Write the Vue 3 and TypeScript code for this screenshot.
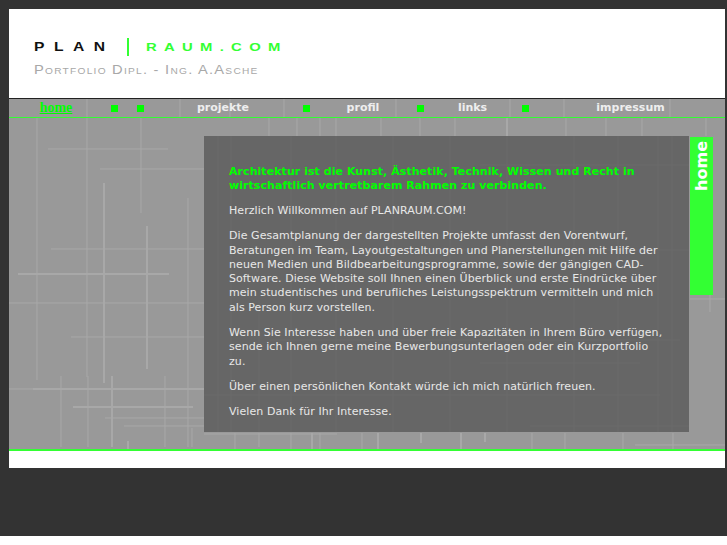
<script setup lang="ts">
type Line = [number, number, number, number, number?]

const navItems = [
  { label: 'home', active: true },
  { sep: true },
  { spacer: true },
  { sep: true },
  { label: 'projekte' },
  { sep: true },
  { label: 'profil' },
  { sep: true },
  { label: 'links' },
  { sep: true },
  { label: 'impressum' }
]

// scratchy background lines in page coordinates
const lines: Line[] = [
  // nav strip
  [87, 99, 87, 117], [180, 99, 180, 117], [230, 99, 230, 117], [284, 99, 284, 117],
  [396, 99, 396, 117], [510, 99, 510, 117], [564, 99, 564, 117], [670, 99, 670, 117],
  // left side
  [37, 118, 37, 380], [87, 118, 87, 377], [141, 118, 141, 213], [104, 183, 104, 383, 2],
  [147, 226, 147, 369, 2], [188, 198, 188, 447], [61, 376, 61, 447], [88, 376, 88, 447],
  [112, 376, 112, 447, 2], [165, 376, 165, 447], [128, 441, 128, 449, 2], [192, 428, 192, 447],
  [48, 149, 168, 149], [100, 169, 204, 169], [51, 249, 204, 249], [18, 274, 169, 274, 2],
  [9, 303, 204, 303], [71, 337, 204, 337], [9, 389, 204, 389], [33, 389, 204, 389, 2],
  [73, 407, 193, 407, 2], [105, 418, 204, 418], [124, 426, 204, 426],
  // band above the panel
  [269, 118, 269, 136], [297, 118, 297, 136], [320, 118, 320, 136], [336, 118, 336, 136],
  [381, 118, 381, 136], [420, 118, 420, 136], [455, 118, 455, 136], [507, 118, 507, 136, 2],
  [566, 118, 566, 136], [606, 118, 606, 136], [642, 118, 642, 136],
  // band below the panel
  [235, 433, 235, 449], [259, 433, 259, 447], [291, 433, 291, 449], [312, 433, 312, 449, 2],
  [320, 433, 320, 449], [362, 433, 362, 449], [378, 433, 378, 449, 2], [421, 433, 421, 443, 2],
  [461, 433, 461, 449, 2], [485, 433, 485, 442, 2], [532, 433, 532, 449], [565, 433, 565, 449],
  [623, 433, 623, 449], [673, 433, 673, 449], [635, 445, 725, 445], [204, 434, 337, 434],
  // right of the panel
  [710, 260, 710, 312], [690, 299, 725, 299], [706, 118, 706, 136],
  // seen through the panel
  [218, 136, 218, 432], [231, 136, 231, 432], [259, 300, 259, 432], [291, 136, 291, 432],
  [336, 136, 336, 432], [393, 136, 393, 432], [450, 136, 450, 432], [507, 136, 507, 432],
  [574, 136, 574, 432], [618, 136, 618, 432], [658, 136, 658, 432], [672, 136, 672, 432],
  [300, 250, 689, 250], [480, 165, 689, 165], [270, 340, 680, 340], [480, 363, 640, 363],
  [204, 395, 660, 395], [530, 426, 689, 426]
]
</script>

<template>
  <div class="page">
    <div class="frame">
      <header class="head">
        <div class="logo">
          <span class="plan">PLAN</span>
          <i class="bar"></i>
          <span class="raum">RAUM.COM</span>
        </div>
        <div class="sub">Portfolio Dipl. - Ing. A.Asche</div>
      </header>

      <div class="stage">
        <svg class="scratches" width="716" height="350" viewBox="9 99 716 350">
          <line
            v-for="(l, i) in lines"
            :key="i"
            :x1="l[0]"
            :y1="l[1]"
            :x2="l[2]"
            :y2="l[3]"
            :stroke-width="l[4] || 1"
            stroke="#a8a8a8"
          />
        </svg>

        <nav class="nav">
          <template v-for="(item, i) in navItems" :key="i">
            <span v-if="item.sep" class="cell"><i class="dot"></i></span>
            <span v-else-if="item.spacer" class="cell"></span>
            <a v-else class="cell link" :class="{ active: item.active }">{{ item.label }}</a>
          </template>
        </nav>

        <div class="content">
          <main class="panel">
            <h1>Architektur ist die Kunst, Ästhetik, Technik, Wissen und Recht in wirtschaftlich vertretbarem Rahmen zu verbinden.</h1>
            <p>Herzlich Willkommen auf PLANRAUM.COM!</p>
            <p>Die Gesamtplanung der dargestellten Projekte umfasst den Vorentwurf, Beratungen im Team, Layoutgestaltungen und Planerstellungen mit Hilfe der neuen Medien und Bildbearbeitungsprogramme, sowie der gängigen CAD-Software. Diese Website soll Ihnen einen Überblick und erste Eindrücke über mein studentisches und berufliches Leistungsspektrum vermitteln und mich als Person kurz vorstellen.</p>
            <p>Wenn Sie Interesse haben und über freie Kapazitäten in Ihrem Büro verfügen, sende ich Ihnen gerne meine Bewerbungsunterlagen oder ein Kurzportfolio zu.</p>
            <p>Über einen persönlichen Kontakt würde ich mich natürlich freuen.</p>
            <p>Vielen Dank für Ihr Interesse.</p>
          </main>
          <aside class="tab"><span>home</span></aside>
        </div>
      </div>

      <div class="foot"></div>
    </div>
  </div>
</template>

<style>
html,
body {
  background: #fff;
}
</style>

<style scoped>
.page {
  height: 536px;
  background: #333;
  padding: 9px 2px 0 9px;
  box-sizing: border-box;
  font-family: "DejaVu Sans", sans-serif;
  overflow: hidden;
}

.frame {
  height: 459px;
  background: #fff;
  display: flex;
  flex-direction: column;
}

.head {
  height: 90px;
  box-sizing: border-box;
  padding: 29px 0 0 25px;
  border-bottom: 1px solid #222;
}

.logo {
  display: flex;
  align-items: center;
  height: 18px;
}

.plan,
.raum {
  font-family: "Liberation Sans", sans-serif;
  font-weight: 700;
  line-height: 18px;
  transform-origin: left center;
  white-space: nowrap;
}

.plan {
  width: 93px;
  color: #111;
  font-size: 12.5px;
  letter-spacing: 7.6px;
  transform: scaleX(1.25);
}

.bar {
  width: 2px;
  height: 18px;
  background: #33ff33;
  margin-right: 17px;
}

.raum {
  color: #33ff33;
  font-size: 11px;
  letter-spacing: 5.4px;
  transform: scaleX(1.35);
}

.sub {
  margin-top: 7px;
  font-family: "Liberation Sans", sans-serif;
  font-variant: small-caps;
  font-size: 13px;
  line-height: 14px;
  letter-spacing: 1.1px;
  color: #a8a8a8;
  white-space: nowrap;
  transform: scaleX(1.13);
  transform-origin: left center;
}

.stage {
  position: relative;
  height: 350px;
  background: #999;
  border-bottom: 2px solid #33ff33;
  overflow: hidden;
}

.scratches {
  position: absolute;
  left: 0;
  top: 0;
}

.nav {
  position: relative;
  height: 18px;
  border-bottom: 1px solid #33ff33;
  display: grid;
  grid-template-columns: 94px 22px 4px 22px 144px 22px 92px 22px 83px 22px 189px;
  font-weight: 700;
  font-size: 11px;
  line-height: 16px;
}

.cell {
  display: flex;
  justify-content: center;
  align-items: center;
}

.link {
  color: #eee;
  padding-bottom: 1px;
}

.active {
  color: #00ff00;
  font-family: "Liberation Serif", serif;
  font-size: 14px;
  text-decoration: underline;
}

.dot {
  width: 7px;
  height: 7px;
  background: #00ff00;
}

.content {
  position: relative;
  display: flex;
  align-items: flex-start;
  padding: 18px 0 0 195px;
}

.panel {
  width: 485px;
  height: 296px;
  box-sizing: border-box;
  padding: 29px 25px 0 25px;
  background: rgba(85, 85, 85, 0.75);
  font-size: 11px;
  line-height: 14.3px;
  letter-spacing: 0.07px;
  color: #e8e8e8;
}

h1 {
  margin: 0 0 11px;
  font-size: 11px;
  line-height: 14px;
  font-weight: 700;
  color: #00ff00;
  letter-spacing: 0.06px;
}

p {
  margin: 0 0 11px;
}

.tab {
  width: 23px;
  height: 158px;
  margin: 1px 0 0 1px;
  background: #33ff33;
  color: #fff;
  font-weight: 700;
  font-size: 16px;
  display: flex;
  justify-content: center;
  align-items: flex-start;
}

.tab span {
  writing-mode: vertical-rl;
  transform: rotate(180deg);
  padding-bottom: 4px;
  line-height: 23px;
}

.foot {
  flex: 1;
}
</style>
